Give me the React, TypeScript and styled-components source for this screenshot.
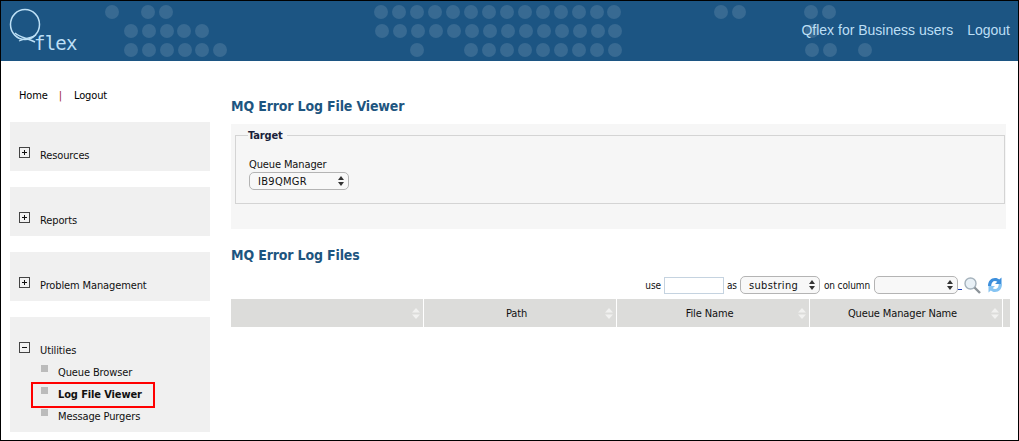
import styled, {createGlobalStyle} from 'styled-components';

const row1 = [112, 148, 166, 381, 399, 417, 435, 453, 471, 489, 507, 525, 543, 561, 579, 597, 614, 721, 739, 811, 829];
const row2 = [131, 149, 167, 184, 202, 382, 400, 418, 436, 454, 472, 490, 508, 526, 544, 562, 580, 598, 615, 812];
const row3 = [131, 149, 167, 185, 202, 220, 417, 471, 489, 507, 525, 543, 561, 579, 597, 615, 812, 830, 865];

const columns = ['', 'Path', 'File Name', 'Queue Manager Name'];

function HeaderDots() {
  return (
    <DotLayer width="1017" height="60" viewBox="0 0 1017 60">
      {[row1, row2, row3].map((row, r) =>
        row.map(x => <circle key={`${r}-${x}`} cx={x - 1} cy={11 + r * 19} r="7" fill="#386a92" />),
      )}
    </DotLayer>
  );
}

function ExpandBox({open}: {open?: boolean}) {
  return (
    <BoxIcon width="11" height="11" viewBox="0 0 11 11">
      <rect x="0.5" y="0.5" width="10" height="10" fill="#f2f2f2" stroke="#444" />
      <path d={open ? 'M3 5.5h5' : 'M3 5.5h5M5.5 3v5'} stroke="#111" fill="none" />
    </BoxIcon>
  );
}

function SortArrows() {
  return (
    <SortIcon width="8" height="11" viewBox="0 0 8 11">
      <path d="M4 0l4 4.5H0zM4 11L0 6.5h8z" fill="#f1f1f0" />
    </SortIcon>
  );
}

function SelectBox({value, width, wide}: {value: string; width: number; wide?: boolean}) {
  return (
    <SelectWrap>
      <Select $wide={wide} style={{width}} defaultValue={value}>
        <option value={value}>{value}</option>
      </Select>
      <SelectArrows width="6" height="10" viewBox="0 0 6 10">
        <path d="M3 0l3 4H0zM3 10L0 6h6z" fill="#333" />
      </SelectArrows>
    </SelectWrap>
  );
}

function App() {
  return (
    <>
      <GlobalStyle />
      <Page>
        <Header>
          <HeaderDots />
          <Logo>
            <svg width="46" height="44" viewBox="0 0 46 44">
              <ellipse cx="21" cy="17.500" rx="14.500" ry="15" fill="none" stroke="#bcdff5" strokeWidth="1.5" />
              <path d="M11 26c4 4 12 5 20 9" fill="none" stroke="#bcdff5" strokeWidth="1.5" />
              <path d="M32 28c-4 3-11 3-17 6" fill="none" stroke="#bcdff5" strokeWidth="1.2" />
            </svg>
            <LogoWord>flex</LogoWord>
          </Logo>
          <HeaderLinks>
            <span>Qflex for Business users</span>
            <span>Logout</span>
          </HeaderLinks>
        </Header>
        <Body>
          <Sidebar>
            <TopLinks>
              <span>Home</span>
              <Divider>|</Divider>
              <span>Logout</span>
            </TopLinks>
            <NavPanel>
              <NavHead>
                <ExpandBox />
                Resources
              </NavHead>
            </NavPanel>
            <NavPanel>
              <NavHead>
                <ExpandBox />
                Reports
              </NavHead>
            </NavPanel>
            <NavPanel>
              <NavHead>
                <ExpandBox />
                Problem Management
              </NavHead>
            </NavPanel>
            <NavPanel>
              <NavHead>
                <ExpandBox open />
                Utilities
              </NavHead>
              <NavList>
                <NavItem>
                  <Bullet />
                  Queue Browser
                </NavItem>
                <NavItem $active>
                  <Bullet />
                  Log File Viewer
                </NavItem>
                <NavItem>
                  <Bullet />
                  Message Purgers
                </NavItem>
              </NavList>
            </NavPanel>
          </Sidebar>
          <Main>
            <Title>MQ Error Log File Viewer</Title>
            <TargetPanel>
              <Fieldset>
                <Legend>Target</Legend>
                <FieldLabel>Queue Manager</FieldLabel>
                <SelectBox value="IB9QMGR" width={100} />
              </Fieldset>
            </TargetPanel>
            <SecondTitle>MQ Error Log Files</SecondTitle>
            <FilterBar>
              <span>use</span>
              <FilterInput />
              <span>as</span>
              <SelectBox value="substring" width={80} wide />
              <ColumnLabel>on column</ColumnLabel>
              <SelectBox value="" width={84} />
              <BlueDash />
              <SearchIcon width="17" height="17" viewBox="0 0 17 17">
                <circle cx="6.500" cy="6.500" r="5.500" fill="#e8f0f6" stroke="#a5b2bc" strokeWidth="1.4" />
                <path d="M10.500 10.500l5.500 5.500" stroke="#8c9399" strokeWidth="2.400" />
              </SearchIcon>
              <RefreshIcon width="16" height="16" viewBox="0 0 16 16">
                <path d="M1 9C1 4 4 1 8 1c2 0 3.300.6 4.200 1.500L14.500 .5V7H8l2.300-2.200C9.500 4.200 8.800 4 8 4 5.800 4 4.200 6 4.200 9z" fill="#3d8fdc" />
                <path d="M15 7c0 5-3 8-7 8-2 0-3.300-.6-4.200-1.500L1.500 15.500V9H8l-2.300 2.200c.8.600 1.500.8 2.300.8 2.200 0 3.800-2 3.800-5z" fill="#86c4f2" />
              </RefreshIcon>
            </FilterBar>
            <TableHead>
              {columns.map((name, i) => (
                <HeadCell key={i}>
                  {name}
                  <SortArrows />
                </HeadCell>
              ))}
              <HeadCell />
            </TableHead>
          </Main>
        </Body>
      </Page>
    </>
  );
}

export default App;

const GlobalStyle = createGlobalStyle`
  body {
    margin: 0;
    background: #fff;
  }
`;

const Page = styled.div`
  width: 1019px;
  height: 441px;
  box-sizing: border-box;
  border: 1px solid #000;
  overflow: hidden;
  font-family: 'DejaVu Sans Condensed', 'DejaVu Sans', sans-serif;
  font-size: 11px;
  letter-spacing: -0.12px;
  color: #111;
`;

const Header = styled.header`
  position: relative;
  height: 60px;
  background: #1c5583;
  display: flex;
  align-items: center;
  justify-content: space-between;
  padding: 0 8px 0 8px;
`;

const DotLayer = styled.svg`
  position: absolute;
  left: 0;
  top: 0;
`;

const Logo = styled.div`
  position: relative;
  width: 70px;
  height: 50px;
  margin-top: 2px;
  svg {
    position: absolute;
    left: -5px;
    top: 0;
  }
`;

const LogoWord = styled.span`
  position: absolute;
  left: 25px;
  top: 24px;
  font-family: 'DejaVu Sans Mono', monospace;
  font-size: 19px;
  line-height: 24px;
  letter-spacing: -0.8px;
  color: #bcdff5;
`;

const HeaderLinks = styled.div`
  position: relative;
  display: flex;
  gap: 14px;
  margin-top: -3px;
  font-family: 'Liberation Sans', Arial, sans-serif;
  font-size: 14px;
  letter-spacing: 0;
  color: #bcdff5;
`;

const Body = styled.div`
  display: flex;
`;

const Sidebar = styled.aside`
  width: 200px;
  margin-left: 9px;
  flex-shrink: 0;
`;

const TopLinks = styled.div`
  height: 61px;
  box-sizing: border-box;
  padding: 28px 0 0 9px;
  line-height: 14px;
  display: flex;
  gap: 11px;
  color: #000;
`;

const Divider = styled.span`
  margin-right: 1px;
  color: #a01c30;
`;

const NavPanel = styled.section`
  background: #f0f0f0;
  min-height: 49px;
  box-sizing: border-box;
  padding-top: 25px;
  margin-bottom: 16px;
`;

const NavHead = styled.div`
  display: flex;
  align-items: center;
  gap: 10px;
  padding-left: 9px;
  height: 16px;
`;

const BoxIcon = styled.svg`
  margin-top: -5px;
`;

const NavList = styled.ul`
  list-style: none;
  margin: 4px 0 0;
  padding: 0 0 4px 23px;
`;

const NavItem = styled.li<{$active?: boolean}>`
  display: flex;
  align-items: flex-start;
  gap: 10px;
  width: 120px;
  height: 22px;
  line-height: 22px;
  padding-left: 8px;
  box-sizing: border-box;
  font-weight: ${p => (p.$active ? 'bold' : 'normal')};
  outline: ${p => (p.$active ? '2px solid #f00' : 'none')};
`;

const Bullet = styled.i`
  width: 7px;
  height: 7px;
  margin-top: 3px;
  background: #bbb;
  flex-shrink: 0;
`;

const Main = styled.main`
  margin-left: 21px;
  width: 777px;
`;

const Title = styled.h2`
  margin: 0;
  height: 63px;
  box-sizing: border-box;
  padding-top: 36px;
  font-size: 14px;
  line-height: 18px;
  letter-spacing: -0.15px;
  color: #1d5580;
`;

const SecondTitle = styled(Title)`
  height: 47px;
  padding-top: 17px;
`;

const TargetPanel = styled.section`
  width: 775px;
  height: 105px;
  box-sizing: border-box;
  background: #f6f6f6;
  padding: 3px 1px 0 4px;
`;

const Fieldset = styled.fieldset`
  margin: 0;
  height: 77px;
  box-sizing: border-box;
  border: 1px solid #d4d4d4;
  padding: 0 0 0 13px;
`;

const Legend = styled.legend`
  margin-left: -1px;
  padding: 2px 4px 0 0;
  font-weight: bold;
  line-height: 14px;
  color: #1a1f3a;
`;

const FieldLabel = styled.div`
  margin-top: 15px;
  line-height: 14px;
`;

const SelectWrap = styled.span`
  position: relative;
  display: inline-block;
  height: 18px;
`;

const Select = styled.select<{$wide?: boolean}>`
  appearance: none;
  display: block;
  height: 18px;
  box-sizing: border-box;
  border: 1px solid #b4b4b4;
  border-radius: 5px;
  background: #f8f8f8;
  padding: 0 0 0 8px;
  font-family: 'DejaVu Sans Condensed', 'DejaVu Sans', sans-serif;
  font-size: 11px;
  letter-spacing: ${p => (p.$wide ? '0.35px' : '0.3px')};
  color: #111;
`;

const SelectArrows = styled.svg`
  position: absolute;
  right: 5px;
  top: 4px;
`;

const FilterBar = styled.div`
  display: flex;
  align-items: center;
  justify-content: flex-end;
  gap: 3px;
  height: 22px;
  margin-top: -2px;
  padding-right: 5px;
  font-size: 10px;
`;

const ColumnLabel = styled.span`
  margin: 0 1px;
`;

const FilterInput = styled.input`
  width: 60px;
  height: 17px;
  box-sizing: border-box;
  border: 1px solid #c5d3e0;
  background: #fff;
`;

const BlueDash = styled.span`
  width: 4px;
  height: 1px;
  margin: 9px 0 0 -3px;
  background: #1a3fc0;
`;

const SearchIcon = styled.svg`
  margin-left: -1px;
`;

const RefreshIcon = styled.svg`
  margin-left: 3px;
`;

const TableHead = styled.div`
  display: grid;
  grid-template-columns: repeat(4, 192px) 5px;
  gap: 1px;
  margin-top: 3px;
`;

const HeadCell = styled.div`
  position: relative;
  height: 28px;
  line-height: 28px;
  padding: 1px 7px 0 0;
  box-sizing: border-box;
  background: #dcdcda;
  text-align: center;
`;

const SortIcon = styled.svg`
  position: absolute;
  right: 3px;
  top: 9px;
`;
